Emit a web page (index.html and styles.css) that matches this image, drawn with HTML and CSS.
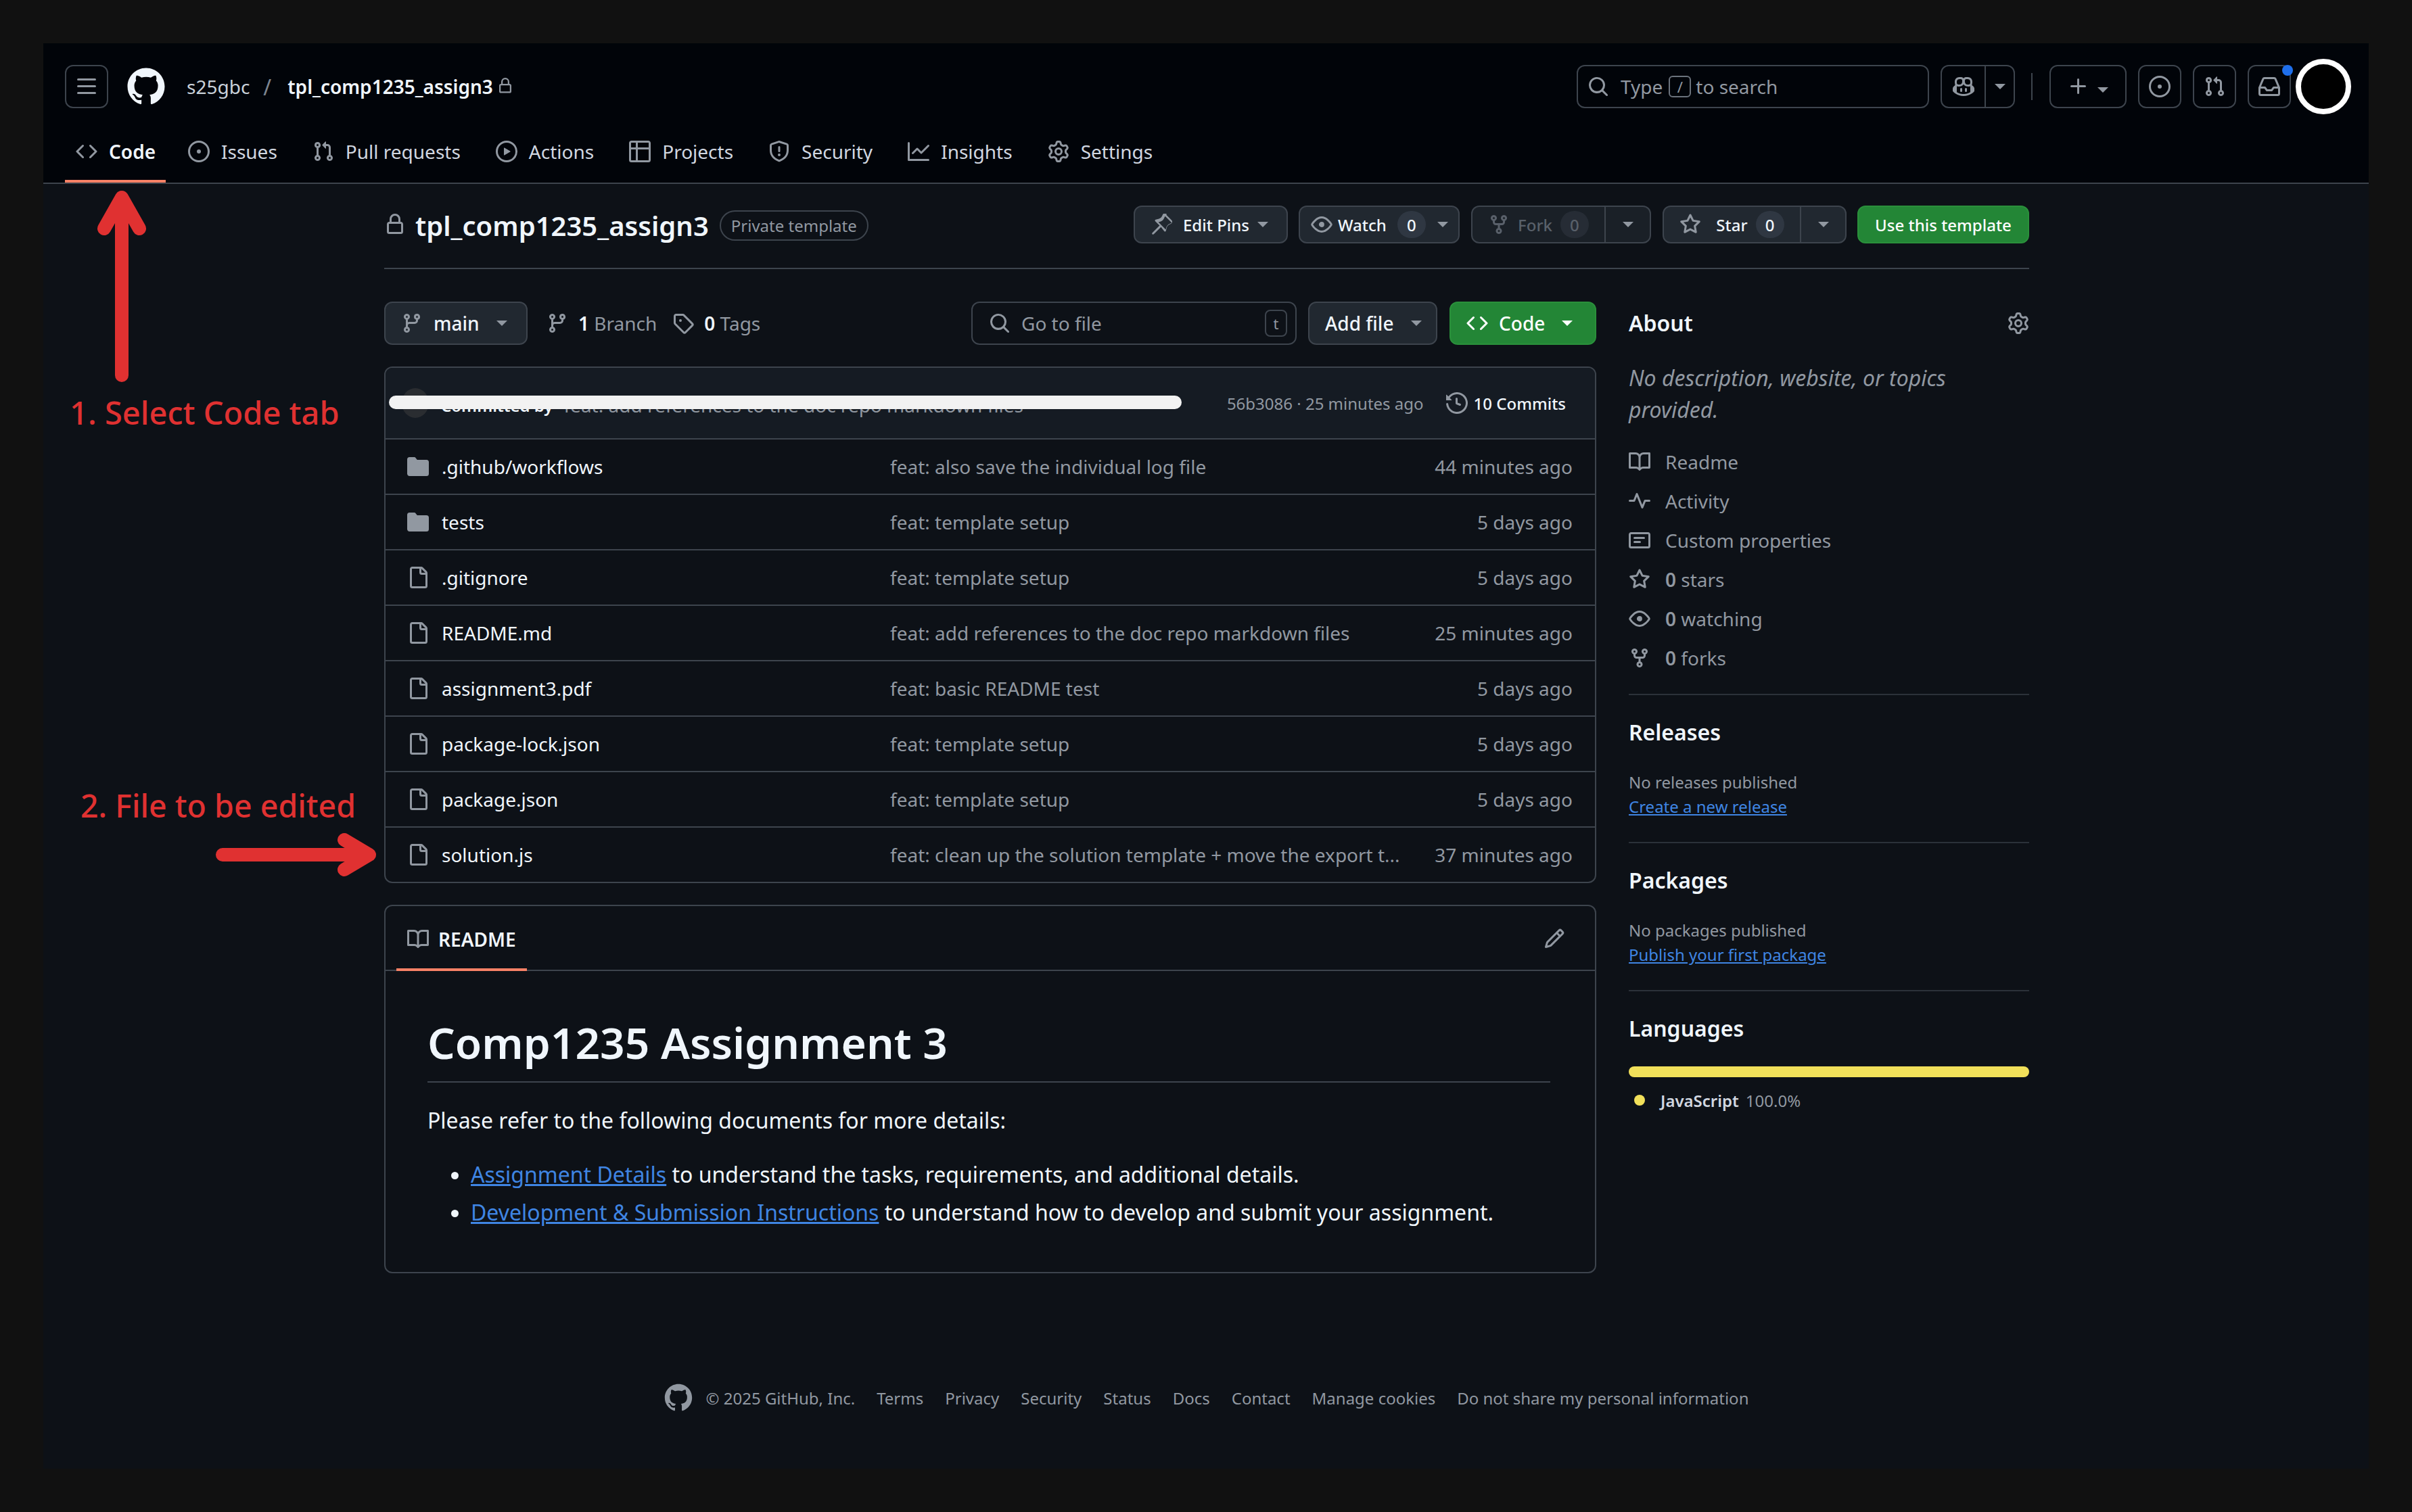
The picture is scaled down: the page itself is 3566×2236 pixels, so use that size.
FILE: index.html
```html
<!DOCTYPE html>
<html lang="en">

<head>
    <meta charset="UTF-8">
    <title>tpl_comp1235_assign3</title>
    <link rel="stylesheet" href="styles.css">
</head>

<body>
    <svg class="sprite" xmlns="http://www.w3.org/2000/svg">
        <symbol id="i-mark" viewBox="0 0 24 24"><path d="M12 1C5.923 1 1 5.923 1 12c0 4.867 3.149 8.979 7.521 10.436.55.096.756-.233.756-.522 0-.262-.013-1.128-.013-2.049-2.764.509-3.479-.674-3.699-1.292-.124-.317-.66-1.293-1.127-1.554-.385-.207-.936-.715-.014-.729.866-.014 1.485.797 1.691 1.128.99 1.663 2.571 1.196 3.204.907.096-.715.385-1.196.701-1.471-2.448-.275-5.005-1.224-5.005-5.432 0-1.196.426-2.186 1.128-2.956-.111-.275-.496-1.402.11-2.915 0 0 .921-.288 3.024 1.128a10.193 10.193 0 0 1 2.75-.371c.936 0 1.871.123 2.75.371 2.104-1.43 3.025-1.128 3.025-1.128.605 1.513.221 2.64.111 2.915.701.77 1.127 1.747 1.127 2.956 0 4.222-2.571 5.157-5.019 5.432.399.344.743 1.004.743 2.035 0 1.471-.014 2.654-.014 3.025 0 .289.206.632.756.522C19.851 20.979 23 16.854 23 12c0-6.077-4.922-11-11-11Z"/></symbol>
        <symbol id="i-bars" viewBox="0 0 16 16"><path d="M1 2.75A.75.75 0 0 1 1.75 2h12.5a.75.75 0 0 1 0 1.5H1.75A.75.75 0 0 1 1 2.75Zm0 5A.75.75 0 0 1 1.75 7h12.5a.75.75 0 0 1 0 1.5H1.75A.75.75 0 0 1 1 7.75ZM1.75 12h12.5a.75.75 0 0 1 0 1.5H1.75a.75.75 0 0 1 0-1.5Z"/></symbol>
        <symbol id="i-code" viewBox="0 0 16 16"><path d="m11.28 3.22 4.25 4.25a.75.75 0 0 1 0 1.06l-4.25 4.25a.749.749 0 0 1-1.275-.326.749.749 0 0 1 .215-.734L13.94 8l-3.72-3.72a.749.749 0 0 1 .326-1.275.749.749 0 0 1 .734.215Zm-6.56 0a.751.751 0 0 1 1.042.018.751.751 0 0 1 .018 1.042L2.06 8l3.72 3.72a.749.749 0 0 1-.326 1.275.749.749 0 0 1-.734-.215L.47 8.53a.75.75 0 0 1 0-1.06Z"/></symbol>
        <symbol id="i-issue" viewBox="0 0 16 16"><path d="M8 9.5a1.5 1.5 0 1 0 0-3 1.5 1.5 0 0 0 0 3Z"/><path d="M8 0a8 8 0 1 1 0 16A8 8 0 0 1 8 0ZM1.5 8a6.5 6.5 0 1 0 13 0 6.5 6.5 0 0 0-13 0Z"/></symbol>
        <symbol id="i-pr" viewBox="0 0 16 16"><path d="M1.5 3.25a2.25 2.25 0 1 1 3 2.122v5.256a2.251 2.251 0 1 1-1.5 0V5.372A2.25 2.25 0 0 1 1.5 3.25Zm5.677-.177L9.573.677A.25.25 0 0 1 10 .854V2.5h1A2.5 2.5 0 0 1 13.5 5v5.628a2.251 2.251 0 1 1-1.5 0V5a1 1 0 0 0-1-1h-1v1.646a.25.25 0 0 1-.427.177L7.177 3.427a.25.25 0 0 1 0-.354ZM3.75 2.5a.75.75 0 1 0 0 1.5.75.75 0 0 0 0-1.5Zm0 9.5a.75.75 0 1 0 0 1.5.75.75 0 0 0 0-1.5Zm8.25.75a.75.75 0 1 0 1.5 0 .75.75 0 0 0-1.5 0Z"/></symbol>
        <symbol id="i-play" viewBox="0 0 16 16"><path d="M8 0a8 8 0 1 1 0 16A8 8 0 0 1 8 0ZM1.5 8a6.5 6.5 0 1 0 13 0 6.5 6.5 0 0 0-13 0Zm4.879-2.773 4.264 2.559a.25.25 0 0 1 0 .428l-4.264 2.559A.25.25 0 0 1 6 10.559V5.442a.25.25 0 0 1 .379-.215Z"/></symbol>
        <symbol id="i-table" viewBox="0 0 16 16"><path d="M0 1.75C0 .784.784 0 1.75 0h12.5C15.216 0 16 .784 16 1.75v12.5A1.75 1.75 0 0 1 14.25 16H1.75A1.75 1.75 0 0 1 0 14.25ZM6.5 6.5v8h7.75a.25.25 0 0 0 .25-.25V6.5Zm8-1.5V1.75a.25.25 0 0 0-.25-.25H6.5V5Zm-13 1.5v7.75c0 .138.112.25.25.25H5v-8ZM5 5V1.5H1.75a.25.25 0 0 0-.25.25V5Z"/></symbol>
        <symbol id="i-shield" viewBox="0 0 16 16"><path d="M7.467.133a1.748 1.748 0 0 1 1.066 0l5.25 1.68A1.75 1.75 0 0 1 15 3.48V7c0 1.566-.32 3.182-1.303 4.682-.983 1.498-2.585 2.813-5.032 3.855a1.697 1.697 0 0 1-1.33 0c-2.447-1.042-4.049-2.357-5.032-3.855C1.32 10.182 1 8.566 1 7V3.48a1.75 1.75 0 0 1 1.217-1.667Zm.61 1.429a.25.25 0 0 0-.153 0l-5.25 1.68a.25.25 0 0 0-.174.238V7c0 1.358.275 2.666 1.057 3.86.784 1.194 2.121 2.34 4.366 3.297a.196.196 0 0 0 .154 0c2.245-.956 3.582-2.104 4.366-3.298C13.225 9.666 13.5 8.36 13.5 7V3.48a.251.251 0 0 0-.174-.237l-5.25-1.68ZM8.75 4.75v3a.75.75 0 0 1-1.5 0v-3a.75.75 0 0 1 1.5 0ZM9 10.5a1 1 0 1 1-2 0 1 1 0 0 1 2 0Z"/></symbol>
        <symbol id="i-graph" viewBox="0 0 16 16"><path d="M1.5 1.75V13.5h13.75a.75.75 0 0 1 0 1.5H.75a.75.75 0 0 1-.75-.75V1.75a.75.75 0 0 1 1.5 0Zm14.28 2.53-5.25 5.25a.75.75 0 0 1-1.06 0L7 7.06 4.28 9.78a.751.751 0 0 1-1.042-.018.751.751 0 0 1-.018-1.042l3.25-3.25a.75.75 0 0 1 1.06 0L10 7.94l4.72-4.72a.751.751 0 0 1 1.042.018.751.751 0 0 1 .018 1.042Z"/></symbol>
        <symbol id="i-gear" viewBox="0 0 16 16"><path d="M8 0a8.2 8.2 0 0 1 .701.031C9.444.095 9.99.645 10.16 1.29l.288 1.107c.018.066.079.158.212.224.231.114.454.243.668.386.123.082.233.09.299.071l1.103-.303c.644-.176 1.392.021 1.82.63.27.385.506.792.704 1.218.315.675.111 1.422-.364 1.891l-.814.806c-.049.048-.098.147-.088.294.016.257.016.515 0 .772-.01.147.038.246.088.294l.814.806c.475.469.679 1.216.364 1.891a7.977 7.977 0 0 1-.704 1.217c-.428.61-1.176.807-1.82.63l-1.102-.302c-.067-.019-.177-.011-.3.071a5.909 5.909 0 0 1-.668.386c-.133.066-.194.158-.211.224l-.29 1.106c-.168.646-.715 1.196-1.458 1.26a8.006 8.006 0 0 1-1.402 0c-.743-.064-1.289-.614-1.458-1.26l-.289-1.106c-.018-.066-.079-.158-.212-.224a5.738 5.738 0 0 1-.668-.386c-.123-.082-.233-.09-.299-.071l-1.103.303c-.644.176-1.392-.021-1.82-.63a8.12 8.12 0 0 1-.704-1.218c-.315-.675-.111-1.422.363-1.891l.815-.806c.05-.048.098-.147.088-.294a6.214 6.214 0 0 1 0-.772c.01-.147-.038-.246-.088-.294l-.815-.806C.635 6.045.431 5.298.746 4.623a7.92 7.92 0 0 1 .704-1.217c.428-.61 1.176-.807 1.82-.63l1.102.302c.067.019.177.011.3-.071.214-.143.437-.272.668-.386.133-.066.194-.158.211-.224l.29-1.106C6.009.645 6.556.095 7.299.03 7.53.01 7.764 0 8 0Zm-.571 1.525c-.036.003-.108.036-.137.146l-.289 1.105c-.147.561-.549.967-.998 1.189-.173.086-.34.183-.5.29-.417.278-.97.423-1.529.27l-1.103-.303c-.109-.03-.175.016-.195.045-.22.312-.412.644-.573.99-.014.031-.021.11.059.19l.815.806c.411.406.562.957.53 1.456a4.709 4.709 0 0 0 0 .582c.032.499-.119 1.05-.53 1.456l-.815.806c-.081.08-.073.159-.059.19.162.346.353.677.573.989.02.03.085.076.195.046l1.102-.303c.56-.153 1.113-.008 1.53.27.161.107.328.204.501.29.447.222.85.629.997 1.189l.289 1.105c.029.109.101.143.137.146a6.6 6.6 0 0 0 1.142 0c.036-.003.108-.036.137-.146l.289-1.105c.147-.561.549-.967.998-1.189.173-.086.34-.183.5-.29.417-.278.97-.423 1.529-.27l1.103.303c.109.029.175-.016.195-.045.22-.313.411-.644.573-.99.014-.031.021-.11-.059-.19l-.815-.806c-.411-.406-.562-.957-.53-1.456a4.709 4.709 0 0 0 0-.582c-.032-.499.119-1.05.53-1.456l.815-.806c.081-.08.073-.159.059-.19a6.464 6.464 0 0 0-.573-.989c-.02-.03-.085-.076-.195-.046l-1.102.303c-.56.153-1.113.008-1.53-.27a4.44 4.44 0 0 0-.501-.29c-.447-.222-.85-.629-.997-1.189l-.289-1.105c-.029-.11-.101-.143-.137-.146a6.6 6.6 0 0 0-1.142 0ZM11 8a3 3 0 1 1-6 0 3 3 0 0 1 6 0ZM9.5 8a1.5 1.5 0 1 0-3.001.001A1.5 1.5 0 0 0 9.5 8Z"/></symbol>
        <symbol id="i-lock" viewBox="0 0 16 16"><path d="M4 4a4 4 0 0 1 8 0v2h.25c.966 0 1.75.784 1.75 1.75v5.5A1.75 1.75 0 0 1 12.25 15h-8.5A1.75 1.75 0 0 1 2 13.25v-5.5C2 6.784 2.784 6 3.75 6H4Zm8.25 3.5h-8.5a.25.25 0 0 0-.25.25v5.5c0 .138.112.25.25.25h8.5a.25.25 0 0 0 .25-.25v-5.5a.25.25 0 0 0-.25-.25ZM10.5 6V4a2.5 2.5 0 1 0-5 0v2Z"/></symbol>
        <symbol id="i-search" viewBox="0 0 16 16"><path d="M10.68 11.74a6 6 0 0 1-7.922-8.982 6 6 0 0 1 8.982 7.922l3.04 3.04a.749.749 0 0 1-.326 1.275.749.749 0 0 1-.734-.215ZM11.5 7a4.499 4.499 0 1 0-8.997 0A4.499 4.499 0 0 0 11.5 7Z"/></symbol>
        <symbol id="i-plus" viewBox="0 0 16 16"><path d="M7.75 2a.75.75 0 0 1 .75.75V7h4.25a.75.75 0 0 1 0 1.5H8.5v4.25a.75.75 0 0 1-1.5 0V8.5H2.75a.75.75 0 0 1 0-1.5H7V2.75A.75.75 0 0 1 7.75 2Z"/></symbol>
        <symbol id="i-inbox" viewBox="0 0 16 16"><path d="M2.8 2.06A1.75 1.75 0 0 1 4.41 1h7.18c.7 0 1.333.417 1.61 1.06l2.74 6.395c.04.093.06.194.06.295v4.5A1.75 1.75 0 0 1 14.25 15H1.75A1.75 1.75 0 0 1 0 13.25v-4.5c0-.101.02-.202.06-.295Zm1.61.44a.25.25 0 0 0-.23.152L1.887 8H4.75a.75.75 0 0 1 .6.3L6.625 10h2.75l1.275-1.7a.75.75 0 0 1 .6-.3h2.863L11.82 2.652a.25.25 0 0 0-.23-.152Zm10.09 7h-2.875l-1.275 1.7a.75.75 0 0 1-.6.3h-3.5a.75.75 0 0 1-.6-.3L4.375 9.5H1.5v3.75c0 .138.112.25.25.25h12.5a.25.25 0 0 0 .25-.25Z"/></symbol>
        <symbol id="i-copilot" viewBox="0 0 16 16"><path d="M7.998 15.035c-4.562 0-7.873-2.914-7.998-3.749V9.338c.085-.628.677-1.686 1.588-2.065.013-.07.024-.143.036-.218.029-.183.06-.384.126-.612-.201-.508-.254-1.084-.254-1.656 0-.87.128-1.769.693-2.484.579-.733 1.494-1.124 2.724-1.261 1.206-.134 2.262.034 2.944.765.05.053.096.108.139.165.044-.057.094-.112.143-.165.682-.731 1.738-.899 2.944-.765 1.23.137 2.145.528 2.724 1.261.566.715.693 1.614.693 2.484 0 .572-.053 1.148-.254 1.656.066.228.098.429.126.612.012.076.024.148.037.218.924.385 1.522 1.471 1.591 2.095v1.872c0 .766-3.351 3.795-8.002 3.795Zm0-1.485c2.28 0 4.584-1.11 5.002-1.433V7.862l-.023-.116c-.49.21-1.075.291-1.727.291-1.146 0-2.059-.327-2.71-.991A3.222 3.222 0 0 1 8 6.303a3.24 3.24 0 0 1-.544.743c-.65.664-1.563.991-2.71.991-.652 0-1.236-.081-1.727-.291l-.023.116v4.255c.419.323 2.722 1.433 5.002 1.433ZM6.762 2.83c-.193-.206-.637-.413-1.682-.297-1.019.113-1.479.404-1.713.7-.247.312-.369.789-.369 1.554 0 .793.129 1.171.308 1.371.162.181.519.379 1.442.379.853 0 1.339-.235 1.638-.54.315-.322.527-.827.617-1.553.117-.935-.037-1.395-.241-1.614Zm4.155-.297c-1.044-.116-1.488.091-1.681.297-.204.219-.359.679-.242 1.614.091.726.303 1.231.618 1.553.299.305.784.54 1.638.54.922 0 1.28-.198 1.442-.379.179-.2.308-.578.308-1.371 0-.765-.123-1.242-.37-1.554-.233-.296-.693-.587-1.713-.7Z"/><path d="M6.25 9.037a.75.75 0 0 1 .75.75v1.501a.75.75 0 0 1-1.5 0V9.787a.75.75 0 0 1 .75-.75Zm4.25.75v1.501a.75.75 0 0 1-1.5 0V9.787a.75.75 0 0 1 1.5 0Z"/></symbol>
        <symbol id="i-branch" viewBox="0 0 16 16"><path d="M9.5 3.25a2.25 2.25 0 1 1 3 2.122V6A2.5 2.5 0 0 1 10 8.5H6a1 1 0 0 0-1 1v1.128a2.251 2.251 0 1 1-1.5 0V5.372a2.25 2.25 0 1 1 1.5 0v1.836A2.493 2.493 0 0 1 6 7h4a1 1 0 0 0 1-1v-.628A2.25 2.25 0 0 1 9.5 3.25Zm-6 0a.75.75 0 1 0 1.5 0 .75.75 0 0 0-1.5 0Zm8.25-.75a.75.75 0 1 0 0 1.5.75.75 0 0 0 0-1.5ZM4.25 12a.75.75 0 1 0 0 1.5.75.75 0 0 0 0-1.5Z"/></symbol>
        <symbol id="i-tag" viewBox="0 0 16 16"><path d="M1 7.775V2.75C1 1.784 1.784 1 2.75 1h5.025c.464 0 .91.184 1.238.513l6.25 6.25a1.75 1.75 0 0 1 0 2.474l-5.026 5.026a1.75 1.75 0 0 1-2.474 0l-6.25-6.25A1.752 1.752 0 0 1 1 7.775Zm1.5 0c0 .066.026.13.073.177l6.25 6.25a.25.25 0 0 0 .354 0l5.025-5.025a.25.25 0 0 0 0-.354l-6.25-6.25a.25.25 0 0 0-.177-.073H2.75a.25.25 0 0 0-.25.25ZM6 5a1 1 0 1 1 0 2 1 1 0 0 1 0-2Z"/></symbol>
        <symbol id="i-pin" viewBox="0 0 16 16"><path d="m11.294.984 3.722 3.722a1.75 1.75 0 0 1-.504 2.826l-1.327.613a3.089 3.089 0 0 0-1.707 2.084l-.584 2.454a.75.75 0 0 1-1.259.353L7.243 9.846l-5.333 5.334a.749.749 0 0 1-1.275-.326.749.749 0 0 1 .215-.734l5.334-5.333-3.19-3.19a.75.75 0 0 1 .353-1.26l2.453-.584a3.089 3.089 0 0 0 2.085-1.707l.612-1.327a1.75 1.75 0 0 1 2.827-.504ZM10.47 2.05a.25.25 0 0 0-.403.072l-.613 1.327a4.587 4.587 0 0 1-3.095 2.535l-1.05.25 5.46 5.46.25-1.05a4.587 4.587 0 0 1 2.535-3.095l1.327-.613a.25.25 0 0 0 .072-.403Z"/></symbol>
        <symbol id="i-eye" viewBox="0 0 16 16"><path d="M8 2c1.981 0 3.671.992 4.933 2.078 1.27 1.091 2.187 2.345 2.637 3.023a1.62 1.62 0 0 1 0 1.798c-.45.678-1.367 1.932-2.637 3.023C11.67 13.008 9.981 14 8 14c-1.981 0-3.671-.992-4.933-2.078C1.797 10.83.88 9.576.43 8.898a1.62 1.62 0 0 1 0-1.798c.45-.677 1.367-1.931 2.637-3.022C4.33 2.992 6.019 2 8 2ZM1.679 7.932a.12.12 0 0 0 0 .136c.411.622 1.241 1.75 2.366 2.717C5.176 11.758 6.527 12.5 8 12.5c1.473 0 2.825-.742 3.955-1.715 1.124-.967 1.954-2.096 2.366-2.717a.12.12 0 0 0 0-.136c-.412-.621-1.242-1.75-2.366-2.717C10.824 4.242 9.473 3.5 8 3.5c-1.473 0-2.825.742-3.955 1.715-1.124.967-1.954 2.096-2.366 2.717ZM8 10a2 2 0 1 1-.001-3.999A2 2 0 0 1 8 10Z"/></symbol>
        <symbol id="i-fork" viewBox="0 0 16 16"><path d="M5 5.372v.878c0 .414.336.75.75.75h4.5a.75.75 0 0 0 .75-.75v-.878a2.25 2.25 0 1 1 1.5 0v.878a2.25 2.25 0 0 1-2.25 2.25h-1.5v2.128a2.251 2.251 0 1 1-1.5 0V8.5h-1.5A2.25 2.25 0 0 1 3.5 6.25v-.878a2.25 2.25 0 1 1 1.5 0ZM5 3.25a.75.75 0 1 0-1.5 0 .75.75 0 0 0 1.5 0Zm6.75.75a.75.75 0 1 0 0-1.5.75.75 0 0 0 0 1.5Zm-3 8.75a.75.75 0 1 0-1.5 0 .75.75 0 0 0 1.5 0Z"/></symbol>
        <symbol id="i-star" viewBox="0 0 16 16"><path d="M8 .25a.75.75 0 0 1 .673.418l1.882 3.815 4.21.612a.75.75 0 0 1 .416 1.279l-3.046 2.97.719 4.192a.751.751 0 0 1-1.088.791L8 12.347l-3.766 1.98a.75.75 0 0 1-1.088-.79l.72-4.194L.818 6.374a.75.75 0 0 1 .416-1.28l4.21-.611L7.327.668A.75.75 0 0 1 8 .25Zm0 2.445L6.615 5.5a.75.75 0 0 1-.564.41l-3.097.45 2.24 2.184a.75.75 0 0 1 .216.664l-.528 3.084 2.769-1.456a.75.75 0 0 1 .698 0l2.77 1.456-.53-3.084a.75.75 0 0 1 .216-.664l2.24-2.183-3.096-.45a.75.75 0 0 1-.564-.41L8 2.694Z"/></symbol>
        <symbol id="i-history" viewBox="0 0 16 16"><path d="m.427 1.927 1.215 1.215a8.002 8.002 0 1 1-1.6 5.685.75.75 0 1 1 1.493-.154 6.5 6.5 0 1 0 1.18-4.458l1.358 1.358A.25.25 0 0 1 3.896 6H.25A.25.25 0 0 1 0 5.75V2.104a.25.25 0 0 1 .427-.177ZM7.75 4a.75.75 0 0 1 .75.75v2.992l2.028.812a.75.75 0 0 1-.557 1.392l-2.5-1A.751.751 0 0 1 7 8.25v-3.5A.75.75 0 0 1 7.75 4Z"/></symbol>
        <symbol id="i-folder" viewBox="0 0 16 16"><path d="M1.75 1A1.75 1.75 0 0 0 0 2.75v10.5C0 14.216.784 15 1.75 15h12.5A1.75 1.75 0 0 0 16 13.25v-8.5A1.75 1.75 0 0 0 14.25 3H7.5a.25.25 0 0 1-.2-.1l-.9-1.2C6.07 1.26 5.55 1 5 1H1.75Z"/></symbol>
        <symbol id="i-file" viewBox="0 0 16 16"><path d="M2 1.75C2 .784 2.784 0 3.75 0h6.586c.464 0 .909.184 1.237.513l2.914 2.914c.329.328.513.773.513 1.237v9.586A1.75 1.75 0 0 1 13.25 16h-9.5A1.75 1.75 0 0 1 2 14.25Zm1.75-.25a.25.25 0 0 0-.25.25v12.5c0 .138.112.25.25.25h9.5a.25.25 0 0 0 .25-.25V6h-2.75A1.75 1.75 0 0 1 9 4.25V1.5Zm6.75.062V4.25c0 .138.112.25.25.25h2.688l-.011-.013-2.914-2.914-.013-.011Z"/></symbol>
        <symbol id="i-book" viewBox="0 0 16 16"><path d="M0 1.75A.75.75 0 0 1 .75 1h4.253c1.227 0 2.317.59 3 1.501A3.743 3.743 0 0 1 11.006 1h4.245a.75.75 0 0 1 .75.75v10.5a.75.75 0 0 1-.75.75h-4.507a2.25 2.25 0 0 0-1.591.659l-.622.621a.75.75 0 0 1-1.06 0l-.622-.621A2.25 2.25 0 0 0 5.258 13H.75a.75.75 0 0 1-.75-.75Zm7.251 10.324.004-5.073-.002-2.253A2.25 2.25 0 0 0 5.003 2.5H1.5v9h3.757a3.75 3.75 0 0 1 1.994.574ZM8.755 4.75l-.004 7.322a3.752 3.752 0 0 1 1.992-.572H14.5v-9h-3.495a2.25 2.25 0 0 0-2.25 2.25Z"/></symbol>
        <symbol id="i-pulse" viewBox="0 0 16 16"><path d="M6 2c.306 0 .582.187.696.471L10 10.731l1.304-3.26A.751.751 0 0 1 12 7h3.25a.75.75 0 0 1 0 1.5h-2.742l-1.812 4.528a.751.751 0 0 1-1.392 0L6 4.77 4.696 8.03A.75.75 0 0 1 4 8.5H.75a.75.75 0 0 1 0-1.5h2.742l1.812-4.529A.751.751 0 0 1 6 2Z"/></symbol>
        <symbol id="i-note" viewBox="0 0 16 16"><path d="M0 3.75C0 2.784.784 2 1.75 2h12.5c.966 0 1.75.784 1.75 1.75v8.5A1.75 1.75 0 0 1 14.25 14H1.75A1.75 1.75 0 0 1 0 12.25Zm1.75-.25a.25.25 0 0 0-.25.25v8.5c0 .138.112.25.25.25h12.5a.25.25 0 0 0 .25-.25v-8.5a.25.25 0 0 0-.25-.25ZM3.5 6.25a.75.75 0 0 1 .75-.75h7a.75.75 0 0 1 0 1.5h-7a.75.75 0 0 1-.75-.75Zm.75 2.25h4a.75.75 0 0 1 0 1.5h-4a.75.75 0 0 1 0-1.5Z"/></symbol>
        <symbol id="i-pencil" viewBox="0 0 16 16"><path d="M11.013 1.427a1.75 1.75 0 0 1 2.474 0l1.086 1.086a1.75 1.75 0 0 1 0 2.474l-8.61 8.61c-.21.21-.47.364-.756.445l-3.251.93a.75.75 0 0 1-.927-.928l.929-3.25c.081-.286.235-.547.445-.758l8.61-8.61Zm.176 4.823L9.75 4.81l-6.286 6.287a.253.253 0 0 0-.064.108l-.558 1.953 1.953-.558a.253.253 0 0 0 .108-.064Zm1.238-3.763a.25.25 0 0 0-.354 0L10.811 3.75l1.439 1.44 1.263-1.263a.25.25 0 0 0 0-.354Z"/></symbol>
    </svg>

    <div class="frame">
        <header class="appbar">
            <div class="top-row">
                <button class="icon-btn"><svg class="icon"><use href="#i-bars"/></svg></button>
                <svg class="logo"><use href="#i-mark"/></svg>
                <span class="owner">s25gbc</span>
                <span class="slash">/</span>
                <span class="repo-name">tpl_comp1235_assign3</span>
                <svg class="repo-lock"><use href="#i-lock"/></svg>

                <div class="top-actions">
                    <div class="global-search">
                        <svg class="icon"><use href="#i-search"/></svg>
                        <span>Type</span><kbd class="slash-key">/</kbd><span>to search</span>
                    </div>
                    <div class="split-btn copilot">
                        <span class="split-main"><svg class="icon"><use href="#i-copilot"/></svg></span>
                        <span class="split-caret"><i class="caret"></i></span>
                    </div>
                    <span class="v-divider"></span>
                    <button class="icon-btn plus-btn"><svg class="icon"><use href="#i-plus"/></svg><i class="caret"></i></button>
                    <button class="icon-btn"><svg class="icon"><use href="#i-issue"/></svg></button>
                    <button class="icon-btn"><svg class="icon"><use href="#i-pr"/></svg></button>
                    <button class="icon-btn inbox-btn"><svg class="icon"><use href="#i-inbox"/></svg><span class="notif-dot"></span></button>
                    <span class="avatar"></span>
                </div>
            </div>
            <nav class="tabs">
                <a class="tab active"><svg class="icon"><use href="#i-code"/></svg>Code</a>
                <a class="tab"><svg class="icon"><use href="#i-issue"/></svg>Issues</a>
                <a class="tab"><svg class="icon"><use href="#i-pr"/></svg>Pull requests</a>
                <a class="tab"><svg class="icon"><use href="#i-play"/></svg>Actions</a>
                <a class="tab"><svg class="icon"><use href="#i-table"/></svg>Projects</a>
                <a class="tab"><svg class="icon"><use href="#i-shield"/></svg>Security</a>
                <a class="tab"><svg class="icon"><use href="#i-graph"/></svg>Insights</a>
                <a class="tab"><svg class="icon"><use href="#i-gear"/></svg>Settings</a>
            </nav>
        </header>

        <main class="repo">
            <div class="repo-head">
                <svg class="icon"><use href="#i-lock"/></svg>
                <h1 class="repo-title">tpl_comp1235_assign3</h1>
                <span class="badge">Private template</span>
                <div class="repo-actions">
                    <button class="btn w-pins"><svg class="icon"><use href="#i-pin"/></svg>Edit Pins<i class="caret"></i></button>
                    <button class="btn w-watch"><svg class="icon"><use href="#i-eye"/></svg>Watch<span class="counter">0</span><i class="caret"></i></button>
                    <div class="split-btn repo-split w-fork disabled">
                        <span class="split-main"><svg class="icon"><use href="#i-fork"/></svg>Fork<span class="counter">0</span></span>
                        <span class="split-caret"><i class="caret"></i></span>
                    </div>
                    <div class="split-btn repo-split w-star">
                        <span class="split-main"><svg class="icon"><use href="#i-star"/></svg>Star<span class="counter">0</span></span>
                        <span class="split-caret"><i class="caret"></i></span>
                    </div>
                    <button class="btn btn-green w-template">Use this template</button>
                </div>
            </div>

            <div class="content">
                <div class="main-col">
                    <div class="file-nav">
                        <button class="btn btn-lg w-main"><svg class="icon"><use href="#i-branch"/></svg>main<i class="caret"></i></button>
                        <span class="nav-stat branch-stat"><svg class="icon"><use href="#i-branch"/></svg><span><b>1</b> Branch</span></span>
                        <span class="nav-stat"><svg class="icon"><use href="#i-tag"/></svg><span><b>0</b> Tags</span></span>
                        <div class="goto-file">
                            <svg class="icon"><use href="#i-search"/></svg>
                            <span>Go to file</span>
                            <kbd class="t-key">t</kbd>
                        </div>
                        <button class="btn btn-lg w-add">Add file<i class="caret"></i></button>
                        <button class="btn btn-lg btn-green w-code"><svg class="icon"><use href="#i-code"/></svg>Code<i class="caret"></i></button>
                    </div>

                    <div class="box file-box">
                        <div class="commit-row">
                            <span class="commit-avatar"></span>
                            <span class="commit-author">Committed by</span>
                            <span class="commit-msg">feat: add references to the doc repo markdown files</span>
                            <span class="commit-sha">56b3086 · 25 minutes ago</span>
                            <span class="commit-count"><svg class="icon"><use href="#i-history"/></svg>10 Commits</span>
                            <span class="redact-bar"></span>
                        </div>
                        <div class="file-row"><span class="file-name"><svg class="icon"><use href="#i-folder"/></svg>.github/workflows</span><span class="file-msg">feat: also save the individual log file</span><span class="file-time">44 minutes ago</span></div>
                        <div class="file-row"><span class="file-name"><svg class="icon"><use href="#i-folder"/></svg>tests</span><span class="file-msg">feat: template setup</span><span class="file-time">5 days ago</span></div>
                        <div class="file-row"><span class="file-name"><svg class="icon"><use href="#i-file"/></svg>.gitignore</span><span class="file-msg">feat: template setup</span><span class="file-time">5 days ago</span></div>
                        <div class="file-row"><span class="file-name"><svg class="icon"><use href="#i-file"/></svg>README.md</span><span class="file-msg">feat: add references to the doc repo markdown files</span><span class="file-time">25 minutes ago</span></div>
                        <div class="file-row"><span class="file-name"><svg class="icon"><use href="#i-file"/></svg>assignment3.pdf</span><span class="file-msg">feat: basic README test</span><span class="file-time">5 days ago</span></div>
                        <div class="file-row"><span class="file-name"><svg class="icon"><use href="#i-file"/></svg>package-lock.json</span><span class="file-msg">feat: template setup</span><span class="file-time">5 days ago</span></div>
                        <div class="file-row"><span class="file-name"><svg class="icon"><use href="#i-file"/></svg>package.json</span><span class="file-msg">feat: template setup</span><span class="file-time">5 days ago</span></div>
                        <div class="file-row"><span class="file-name"><svg class="icon"><use href="#i-file"/></svg>solution.js</span><span class="file-msg">feat: clean up the solution template + move the export t...</span><span class="file-time">37 minutes ago</span></div>
                    </div>

                    <div class="box readme-box">
                        <div class="readme-tabs">
                            <a class="readme-tab"><svg class="icon"><use href="#i-book"/></svg>README</a>
                            <svg class="icon pencil"><use href="#i-pencil"/></svg>
                        </div>
                        <article class="markdown">
                            <h2>Comp1235 Assignment 3</h2>
                            <p>Please refer to the following documents for more details:</p>
                            <ul>
                                <li><a>Assignment Details</a> to understand the tasks, requirements, and additional details.</li>
                                <li><a>Development &amp; Submission Instructions</a> to understand how to develop and submit your assignment.</li>
                            </ul>
                        </article>
                    </div>
                </div>

                <aside class="sidebar">
                    <section class="side-section about">
                        <div class="about-head">
                            <h3>About</h3>
                            <svg class="icon"><use href="#i-gear"/></svg>
                        </div>
                        <p class="about-desc">No description, website, or topics provided.</p>
                        <ul class="about-list">
                            <li><svg class="icon"><use href="#i-book"/></svg>Readme</li>
                            <li><svg class="icon"><use href="#i-pulse"/></svg>Activity</li>
                            <li><svg class="icon"><use href="#i-note"/></svg>Custom properties</li>
                            <li><svg class="icon"><use href="#i-star"/></svg><span><b>0</b> stars</span></li>
                            <li><svg class="icon"><use href="#i-eye"/></svg><span><b>0</b> watching</span></li>
                            <li><svg class="icon"><use href="#i-fork"/></svg><span><b>0</b> forks</span></li>
                        </ul>
                    </section>
                    <section class="side-section">
                        <h3>Releases</h3>
                        <div class="side-muted">No releases published</div>
                        <a class="side-link">Create a new release</a>
                    </section>
                    <section class="side-section">
                        <h3>Packages</h3>
                        <div class="side-muted">No packages published</div>
                        <a class="side-link">Publish your first package</a>
                    </section>
                    <section class="side-section last">
                        <h3>Languages</h3>
                        <div class="lang-bar"></div>
                        <div class="lang-legend"><i class="lang-dot"></i><b>JavaScript</b><span>100.0%</span></div>
                    </section>
                </aside>
            </div>
        </main>

        <footer class="page-footer">
            <svg class="footer-logo"><use href="#i-mark"/></svg>
            <span class="copyright">© 2025 GitHub, Inc.</span>
            <a>Terms</a>
            <a>Privacy</a>
            <a>Security</a>
            <a>Status</a>
            <a>Docs</a>
            <a>Contact</a>
            <a>Manage cookies</a>
            <a>Do not share my personal information</a>
        </footer>
    </div>

    <!-- hand drawn notes on top of the screenshot -->
    <svg class="notes-arrows" viewBox="0 0 3566 2236">
        <path d="M180 555V294M154 338 180 292 206 338"/>
        <path d="M329 1264H544M509 1242 546 1264 509 1286"/>
    </svg>
    <div class="note note-one">1. Select Code tab</div>
    <div class="note note-two">2. File to be edited</div>
</body>

</html>
```

FILE: styles.css
```css
* {
    box-sizing: border-box;
}

body {
    margin: 0;
    padding: 64px;
    width: 3566px;
    height: 2236px;
    overflow: hidden;
    position: relative;
    background-color: #111111;
    color: #f0f6fc;
    font-family: "Noto Sans", "Liberation Sans", sans-serif;
    font-size: 28px;
}

.sprite {
    display: none;
}

.icon {
    width: 32px;
    height: 32px;
    flex: none;
    fill: #9198a1;
}

.caret {
    display: inline-block;
    flex: none;
    width: 0;
    height: 0;
    border-left: 8px solid transparent;
    border-right: 8px solid transparent;
    border-top: 8px solid #9198a1;
}

button {
    font: inherit;
    color: inherit;
}

.frame {
    height: 2108px;
    background-color: #0d1117;
}

/* top bar */
.appbar {
    height: 208px;
    padding: 32px 26px 0 32px;
    background-color: #010409;
    border-bottom: 2px solid #3d444d;
}

.top-row {
    display: flex;
    align-items: center;
    height: 64px;
}

.icon-btn {
    position: relative;
    display: flex;
    align-items: center;
    justify-content: center;
    width: 64px;
    height: 64px;
    padding: 0;
    background: transparent;
    border: 2px solid #3d444d;
    border-radius: 12px;
}

.logo {
    width: 60px;
    height: 60px;
    margin-left: 26px;
    fill: #f0f6fc;
}

.owner {
    margin-left: 30px;
    color: #c9d1d9;
}

.slash {
    margin: 0 24px 0 20px;
    color: #7d8590;
    font-size: 32px;
}

.repo-name {
    font-weight: 600;
}

.repo-lock {
    width: 24px;
    height: 24px;
    margin-left: 6px;
    margin-bottom: 2px;
    fill: #9198a1;
}

.top-actions {
    margin-left: auto;
    display: flex;
    align-items: center;
    gap: 17px;
}

.global-search {
    display: flex;
    align-items: center;
    width: 521px;
    height: 64px;
    padding-left: 14px;
    border: 2px solid #3d444d;
    border-radius: 12px;
    color: #9198a1;
    font-size: 28px;
}

.global-search .icon {
    margin-right: 17px;
}

.slash-key {
    display: flex;
    align-items: center;
    justify-content: center;
    width: 33px;
    height: 32px;
    margin: 0 7px 0 9px;
    border: 2px solid #6b727c;
    border-radius: 6px;
    font-family: inherit;
    font-size: 22px;
}

.split-btn {
    display: flex;
    border: 2px solid #3d444d;
    border-radius: 12px;
}

.split-main,
.split-caret {
    display: flex;
    align-items: center;
    justify-content: center;
}

.split-caret {
    border-left: 2px solid #3d444d;
}

.copilot {
    width: 110px;
    height: 64px;
}

.copilot .split-main {
    width: 63px;
}

.copilot .split-caret {
    flex: 1;
}

.v-divider {
    width: 2px;
    height: 40px;
    margin: 0 8px 0 7px;
    background-color: #3d444d;
}

.plus-btn {
    width: 114px;
    gap: 12px;
}

.plus-btn .caret {
    margin-top: 10px;
}

.notif-dot {
    position: absolute;
    top: -2px;
    right: -5px;
    width: 16px;
    height: 16px;
    border-radius: 50%;
    background-color: #1f6feb;
}

.avatar {
    width: 82px;
    height: 82px;
    margin-left: -10px;
    border: 8px solid #ffffff;
    border-radius: 50%;
    background-color: #000000;
}

.tabs {
    display: flex;
    gap: 20px;
    height: 84px;
    margin-top: 26px;
}

.tab {
    display: flex;
    align-items: center;
    gap: 17px;
    padding: 0 16px 4px;
    border-bottom: 4px solid transparent;
    color: #d1d7e0;
}

.tab.active {
    width: 149px;
    margin-right: -3px;
    font-weight: 600;
    color: #f0f6fc;
    border-bottom-color: #f78166;
}

/* repo area */
.repo {
    width: 2432px;
    margin-left: 504px;
}

.repo-head {
    display: flex;
    align-items: center;
    height: 126px;
    padding-top: 32px;
    padding-bottom: 36px;
    border-bottom: 2px solid #3d444d;
}

.repo-title {
    margin: 3px 0 0 14px;
    font-size: 40px;
    font-weight: 600;
}

.badge {
    display: flex;
    align-items: center;
    height: 45px;
    margin: 2px 0 0 16px;
    padding: 0 15px;
    border: 2px solid #3d444d;
    border-radius: 24px;
    color: #9198a1;
    font-size: 24px;
}

.repo-actions {
    margin-left: auto;
    display: flex;
    gap: 16px;
}

.btn {
    display: flex;
    align-items: center;
    justify-content: center;
    gap: 12px;
    height: 56px;
    padding: 0;
    background-color: #212830;
    border: 2px solid #3d444d;
    border-radius: 12px;
    color: #f0f6fc;
    font-size: 24px;
    font-weight: 500;
}

.btn-lg {
    justify-content: flex-start;
    gap: 16px;
    height: 64px;
    padding-left: 23px;
    font-size: 28px;
}

.btn-lg .caret {
    margin-left: 9px;
}

.btn-green {
    background-color: #238636;
    border-color: #2a903b;
    color: #ffffff;
}

.btn-green .icon {
    fill: #ffffff;
}

.btn-green .caret {
    border-top-color: #ffffff;
}

.counter {
    display: flex;
    align-items: center;
    justify-content: center;
    width: 42px;
    height: 40px;
    border-radius: 20px;
    background-color: #2f3742;
    font-size: 24px;
}

.repo-split {
    height: 56px;
    background-color: #212830;
    font-size: 24px;
    font-weight: 500;
}

.repo-split .split-main {
    flex: 1;
    gap: 12px;
}

.repo-split .split-caret {
    width: 67px;
}

.w-pins {
    width: 228px;
    justify-content: flex-start;
    gap: 15px;
    padding-left: 24px;
}

.w-pins .caret {
    margin-left: -3px;
}

.w-watch {
    width: 238px;
    justify-content: flex-start;
    gap: 8px;
    padding-left: 16px;
}

.w-watch .counter {
    margin-left: 8px;
}

.w-watch .caret {
    margin-left: 9px;
}

.w-fork {
    width: 266px;
    margin: 0 1px;
}

.w-star { width: 272px; }

.w-star .icon {
    margin-right: 10px;
}

.w-template { width: 254px; }
.w-main { width: 212px; }
.w-add { width: 191px; }
.w-code { width: 217px; }

.disabled {
    background-color: #1a2027;
    color: #59606a;
}

.disabled .icon {
    fill: #59606a;
}

.disabled .counter {
    color: #59606a;
    background-color: #262c35;
}

.content {
    display: flex;
    gap: 48px;
    margin-top: 48px;
}

.main-col {
    width: 1792px;
    flex: none;
}

.file-nav {
    display: flex;
    align-items: center;
    height: 64px;
    margin-bottom: 32px;
}

.nav-stat {
    display: flex;
    align-items: center;
    gap: 15px;
    margin-left: 23px;
    color: #9198a1;
}

.nav-stat b {
    color: #f0f6fc;
    font-weight: 600;
}

.branch-stat {
    margin-left: 28px;
}

.goto-file {
    display: flex;
    align-items: center;
    width: 481px;
    height: 64px;
    margin: 0 17px 0 auto;
    padding: 0 12px 0 24px;
    border: 2px solid #3d444d;
    border-radius: 12px;
    color: #9198a1;
    gap: 16px;
}

.t-key {
    margin-left: auto;
    display: flex;
    align-items: center;
    justify-content: center;
    width: 33px;
    height: 40px;
    border: 2px solid #3d444d;
    border-radius: 8px;
    font-family: inherit;
    font-size: 22px;
}

.w-code {
    margin-left: 18px;
}

.box {
    border: 2px solid #3d444d;
    border-radius: 12px;
    overflow: hidden;
}

.commit-row {
    position: relative;
    display: flex;
    align-items: center;
    height: 104px;
    padding: 0 43px 0 24px;
    background-color: #151b23;
}

.commit-avatar {
    width: 40px;
    height: 44px;
    border-radius: 50%;
    background-color: #2a2d31;
}

.commit-author {
    margin: 6px 0 0 18px;
    font-size: 24px;
    font-weight: 600;
}

.commit-msg {
    margin: 6px 0 0 16px;
    color: #9198a1;
}

.commit-sha {
    margin-left: auto;
    color: #9198a1;
    font-size: 24px;
}

.commit-count {
    display: flex;
    align-items: center;
    gap: 9px;
    margin-left: 33px;
    font-size: 24px;
    font-weight: 500;
}

.redact-bar {
    position: absolute;
    left: 5px;
    top: 41px;
    width: 1172px;
    height: 20px;
    border-radius: 10px;
    background-color: #f2f2f2;
}

.file-row {
    display: grid;
    grid-template-columns: 714px 1fr auto;
    align-items: center;
    height: 82px;
    padding: 0 33px 0 32px;
    border-top: 2px solid #3d444d;
}

.file-name {
    display: flex;
    align-items: center;
    gap: 19px;
}

.file-msg,
.file-time {
    color: #9198a1;
    white-space: nowrap;
}

.readme-box {
    margin-top: 32px;
}

.readme-tabs {
    display: flex;
    align-items: flex-start;
    justify-content: space-between;
    height: 96px;
    padding: 0 44px 0 16px;
    border-bottom: 2px solid #3d444d;
}

.readme-tab {
    display: flex;
    align-items: center;
    gap: 14px;
    height: 96px;
    padding: 6px 16px 0;
    border-bottom: 4px solid #f78166;
    font-weight: 600;
}

.pencil {
    margin-top: 32px;
}

.markdown {
    padding: 66px 66px 64px 62px;
    font-size: 32px;
    line-height: 48px;
}

.markdown h2 {
    margin: 0;
    height: 99px;
    font-size: 64px;
    font-weight: 600;
    line-height: 80px;
    border-bottom: 2px solid #3d444d;
}

.markdown p {
    margin: 32px 0;
}

.markdown ul {
    margin: 0;
    padding-left: 64px;
}

.markdown li + li {
    margin-top: 8px;
}

.markdown a,
.side-link {
    color: #3f85e3;
    text-decoration: underline;
}

/* sidebar */
.sidebar {
    flex: 1;
}

.side-section {
    padding: 35px 0 34px;
    border-bottom: 2px solid #2b3139;
}

.side-section.about {
    padding: 0 0 24px;
}

.side-section.last {
    border-bottom: 0;
}

.side-section h3 {
    margin: 0;
    font-size: 32px;
    font-weight: 600;
    line-height: 40px;
}

.about-head {
    display: flex;
    align-items: center;
    justify-content: space-between;
    height: 64px;
}

.about-desc {
    margin: 25px 0 0;
    color: #9198a1;
    font-size: 32px;
    font-style: italic;
    line-height: 47px;
}

.about-list {
    list-style: none;
    margin: 25px 0 0;
    padding: 0;
    color: #9198a1;
}

.about-list li {
    display: flex;
    align-items: center;
    gap: 22px;
    height: 58px;
}

.about-list b {
    font-weight: 600;
}

.side-muted {
    margin-top: 36px;
    color: #9198a1;
    font-size: 24px;
    line-height: 36px;
}

.side-link {
    display: block;
    width: fit-content;
    font-size: 24px;
    line-height: 36px;
}

.lang-bar {
    height: 16px;
    margin-top: 36px;
    border-radius: 8px;
    background-color: #f1e05a;
}

.lang-legend {
    display: flex;
    align-items: center;
    height: 36px;
    margin-top: 16px;
    padding-left: 8px;
    font-size: 24px;
}

.lang-dot {
    width: 16px;
    height: 16px;
    margin-right: 23px;
    border-radius: 50%;
    background-color: #f1e05a;
}

.lang-legend b {
    font-weight: 600;
    color: #d1d7e0;
}

.lang-legend span {
    margin-left: 10px;
    color: #9198a1;
}

/* footer */
.page-footer {
    display: flex;
    align-items: center;
    justify-content: center;
    gap: 32px;
    height: 44px;
    margin-top: 162px;
    color: #9198a1;
    font-size: 24px;
}

.footer-logo {
    width: 44px;
    height: 44px;
    margin-right: -13px;
    fill: #9198a1;
}

/* red notes */
.notes-arrows {
    position: absolute;
    left: 0;
    top: 0;
    width: 3566px;
    height: 2236px;
    fill: none;
    stroke: #e03131;
    stroke-width: 20;
    stroke-linecap: round;
    stroke-linejoin: round;
}

.note {
    position: absolute;
    color: #e03131;
    font-size: 47px;
    font-weight: 500;
    line-height: 60px;
    white-space: nowrap;
}

.note-one {
    left: 103px;
    top: 580px;
}

.note-two {
    left: 119px;
    top: 1161px;
    font-size: 46.5px;
}
```
